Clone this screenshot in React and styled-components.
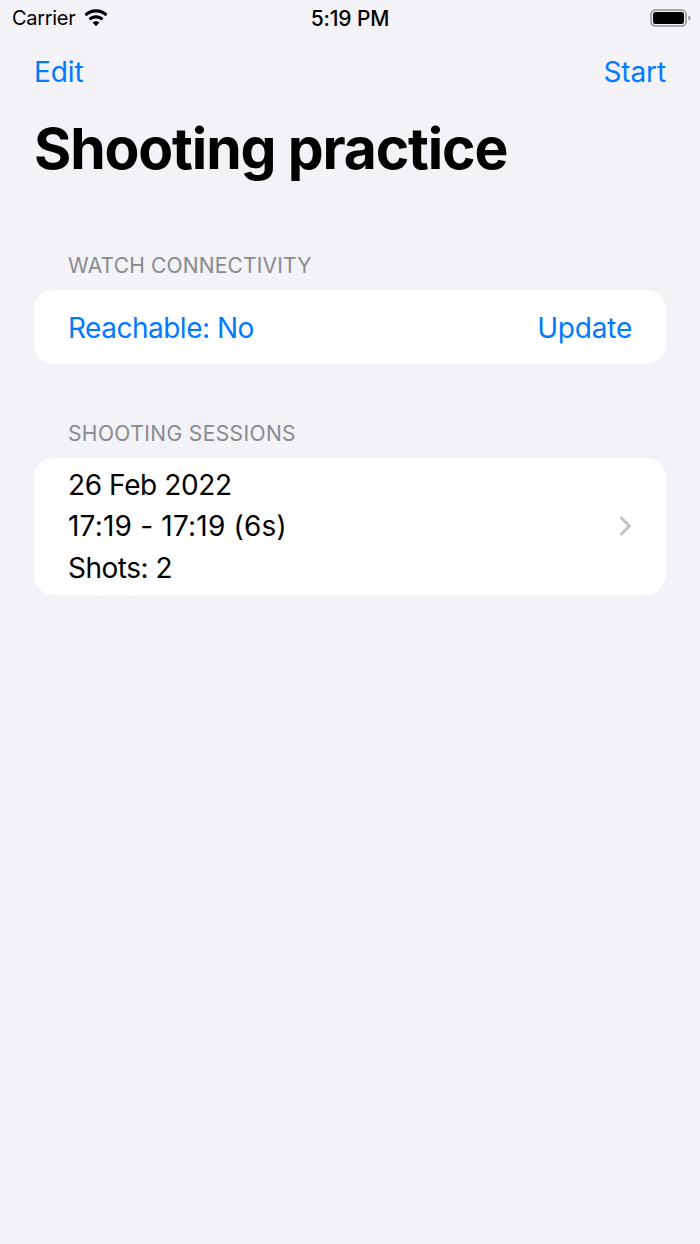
import React from 'react';
import styled, { createGlobalStyle } from 'styled-components';

const GlobalStyle = createGlobalStyle`
  html, body {
    margin: 0;
    padding: 0;
    background: #f2f2f7;
  }
  body {
    font-family: Inter, "Liberation Sans", sans-serif;
    color: #000;
  }
`;

const Page = styled.div`
  width: 700px;
  height: 1244px;
  overflow: hidden;
  background: #f2f2f7;
  display: flex;
  flex-direction: column;
`;

const StatusBar = styled.div`
  height: 36px;
  padding: 0 8px;
  display: grid;
  grid-template-columns: 1fr auto 1fr;
  align-items: center;
`;

const Carrier = styled.div`
  display: flex;
  align-items: center;
  gap: 8px;
  padding-left: 4px;
  font-size: 20px;
  letter-spacing: -0.3px;
`;

const Clock = styled.div`
  font-size: 21px;
  font-weight: 500;
  letter-spacing: -0.15px;
`;

const Battery = styled.div`
  justify-self: end;
  display: flex;
`;

const NavBar = styled.div`
  display: flex;
  justify-content: space-between;
  padding: 0 34px;
  margin-top: 14px;
  height: 44px;
  align-items: center;
`;

const NavLink = styled.a`
  color: #007aff;
  font-size: 28px;
  letter-spacing: -0.1px;
`;

const Title = styled.h1`
  margin: 20px 0 0;
  padding: 0 34px;
  font-size: 57px;
  line-height: 70px;
  font-weight: 700;
  letter-spacing: -1.15px;
`;

const Section = styled.section`
  margin: ${p => p.$top}px 34px 0;
`;

const SectionHeader = styled.div`
  padding: 0 34px;
  height: 36px;
  margin-bottom: 7px;
  display: flex;
  align-items: center;
  font-size: 21px;
  color: #8a8a8e;
  letter-spacing: ${p => p.$spacing}px;
`;

const Card = styled.div`
  background: #fff;
  border-radius: 20px;
  padding: 1px 34px 0;
  box-sizing: border-box;
  display: flex;
  align-items: center;
  justify-content: space-between;
  height: ${p => p.$height}px;
  font-size: 28px;
  letter-spacing: -0.5px;
`;

const BlueText = styled.span`
  color: #007aff;
  letter-spacing: ${p => p.$spacing}px;
`;

const Lines = styled.div`
  display: flex;
  flex-direction: column;
`;

const Line = styled.div`
  line-height: 41.5px;
  letter-spacing: ${p => p.$spacing}px;
`;

const ChevronIcon = styled.svg`
  margin-bottom: 3px;
`;

function WifiIcon() {
  return (
    <svg width="26" height="19" viewBox="0 0 26 19">
      <path d="M13 3.500c3.700 0 7 1.400 9.500 3.800l2.100-2.300C21.500 2 17.500.3 13 .3S4.500 2 1.400 5l2.100 2.300C6 4.900 9.300 3.500 13 3.500z" fill="#000" />
      <path d="M13 9.400c2.100 0 4 .8 5.400 2.100l2.100-2.300C18.500 7.300 15.900 6.200 13 6.200S7.500 7.300 5.500 9.200l2.100 2.300c1.400-1.300 3.300-2.100 5.400-2.100z" fill="#000" />
      <path d="M13 12.200c-1.300 0-2.500.5-3.400 1.300L13 17.300l3.400-3.800c-.9-.8-2.100-1.300-3.400-1.300z" fill="#000" />
    </svg>
  );
}

function BatteryIcon() {
  return (
    <svg width="42" height="20" viewBox="0 0 42 20">
      <rect x="1" y="2" width="35" height="16" rx="4.500" fill="none" stroke="#8e8e8e" strokeWidth="1.500" />
      <rect x="3" y="4" width="31" height="12" rx="2.500" fill="#000" />
      <path d="M38.500 7.500c1.300.4 2 1.300 2 2.500s-.7 2.100-2 2.500z" fill="#8e8e8e" />
    </svg>
  );
}

function Chevron() {
  return (
    <ChevronIcon width="14" height="22" viewBox="0 0 14 22">
      <path d="M2.600 2 L11.300 11 L2.600 20" fill="none" stroke="#c4c4c7" strokeWidth="3.100" />
    </ChevronIcon>
  );
}

export default function App() {
  return (
    <Page>
      <GlobalStyle />
      <StatusBar>
        <Carrier>
          Carrier
          <WifiIcon />
        </Carrier>
        <Clock>5:19 PM</Clock>
        <Battery>
          <BatteryIcon />
        </Battery>
      </StatusBar>
      <NavBar>
        <NavLink>Edit</NavLink>
        <NavLink>Start</NavLink>
      </NavBar>
      <Title>Shooting practice</Title>
      <Section $top={63}>
        <SectionHeader $spacing={0.17}>WATCH CONNECTIVITY</SectionHeader>
        <Card $height={74}>
          <BlueText>Reachable: No</BlueText>
          <BlueText $spacing={-0.2}>Update</BlueText>
        </Card>
      </Section>
      <Section $top={51}>
        <SectionHeader $spacing={0.4}>SHOOTING SESSIONS</SectionHeader>
        <Card $height={137}>
          <Lines>
            <Line $spacing={-0.4}>26 Feb 2022</Line>
            <Line $spacing={0.2}>17:19 - 17:19 (6s)</Line>
            <Line>Shots: 2</Line>
          </Lines>
          <Chevron />
        </Card>
      </Section>
    </Page>
  );
}
